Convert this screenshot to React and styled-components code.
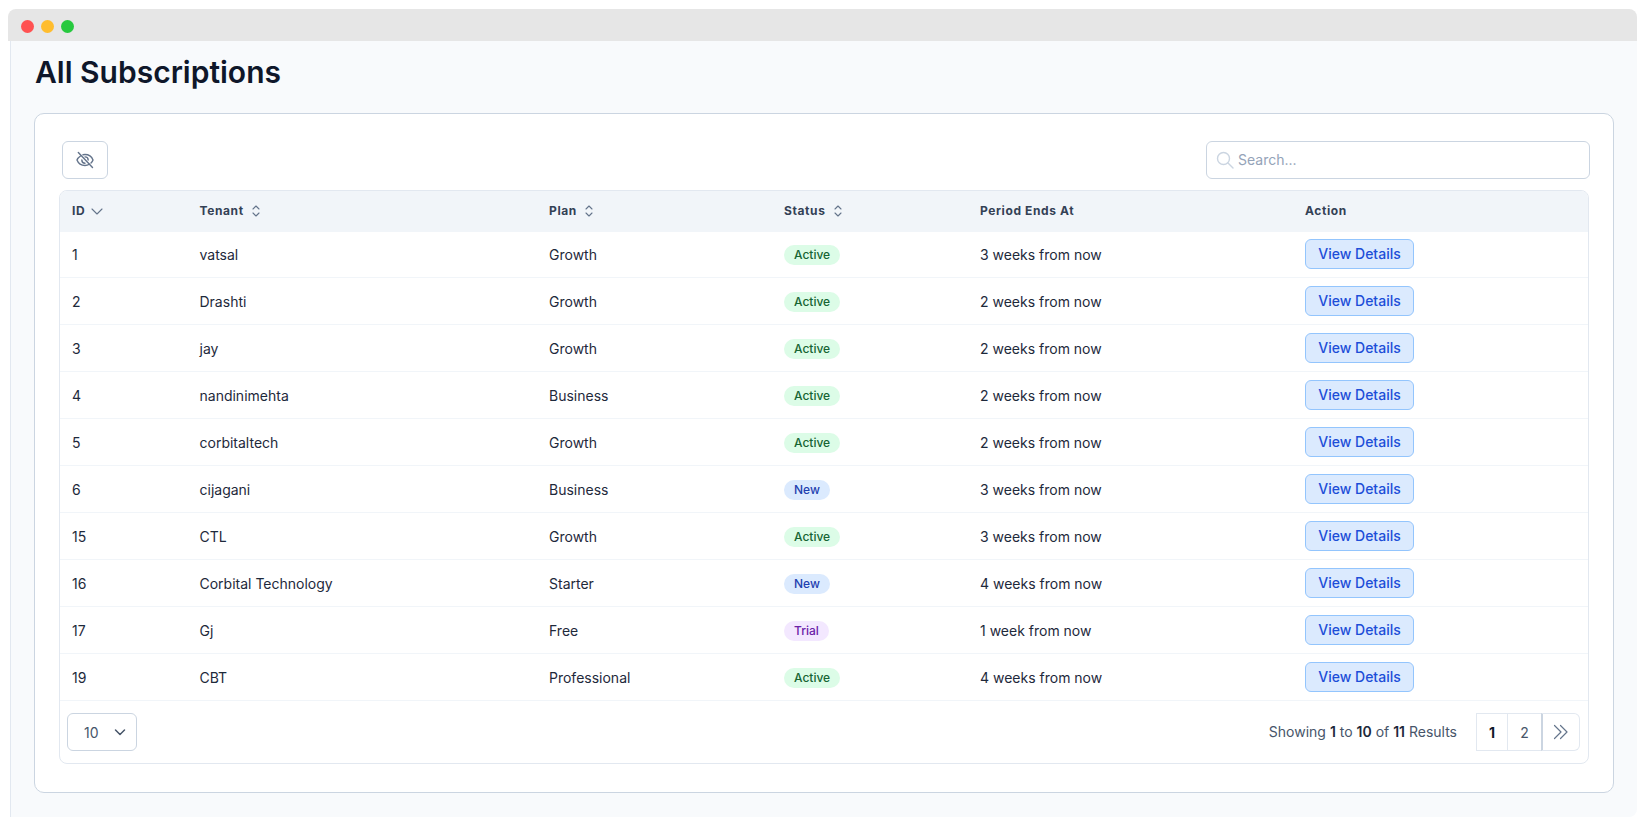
import React from 'react'
import styled, { createGlobalStyle } from 'styled-components'

const GRID = '127.5px 349.5px 235px 196px 325px 1fr'

const rows = [
  { id: 1, tenant: 'vatsal', plan: 'Growth', status: 'Active', ends: '3 weeks from now' },
  { id: 2, tenant: 'Drashti', plan: 'Growth', status: 'Active', ends: '2 weeks from now' },
  { id: 3, tenant: 'jay', plan: 'Growth', status: 'Active', ends: '2 weeks from now' },
  { id: 4, tenant: 'nandinimehta', plan: 'Business', status: 'Active', ends: '2 weeks from now' },
  { id: 5, tenant: 'corbitaltech', plan: 'Growth', status: 'Active', ends: '2 weeks from now' },
  { id: 6, tenant: 'cijagani', plan: 'Business', status: 'New', ends: '3 weeks from now' },
  { id: 15, tenant: 'CTL', plan: 'Growth', status: 'Active', ends: '3 weeks from now' },
  { id: 16, tenant: 'Corbital Technology', plan: 'Starter', status: 'New', ends: '4 weeks from now' },
  { id: 17, tenant: 'Gj', plan: 'Free', status: 'Trial', ends: '1 week from now' },
  { id: 19, tenant: 'CBT', plan: 'Professional', status: 'Active', ends: '4 weeks from now' },
]

const SortIcon = () => (
  <svg width="10" height="14" viewBox="0 0 10 14" fill="none" stroke="#64748b" strokeWidth="1.1" strokeLinecap="round" strokeLinejoin="round">
    <path d="M2 5l3-3 3 3" />
    <path d="M2 9l3 3 3-3" />
  </svg>
)

const App = () => {
  return (
    <>
      <GlobalStyle />
      <Browser>
        <TitleBar>
          <Dot color="#ff5252" />
          <Dot color="#ffbd2e" />
          <Dot color="#27c93f" />
        </TitleBar>
        <Content>
          <Title>All Subscriptions</Title>
          <Card>
            <Toolbar>
              <IconButton>
                <svg width="20" height="20" viewBox="0 0 24 24" fill="none" stroke="#64748b" strokeWidth="1.7" strokeLinecap="round" strokeLinejoin="round">
                  <path d="M4 3l17 18" />
                  <path d="M6.6 7.2C4.6 8.5 3 10.4 2.4 12c1.4 3.6 5.3 6.6 9.6 6.6 1.9 0 3.6-.5 5.2-1.5" />
                  <path d="M9.6 5.7c.8-.2 1.6-.3 2.4-.3 4.3 0 8.2 3 9.6 6.6-.5 1.3-1.3 2.5-2.4 3.6" />
                  <path d="M15.8 12c0-2.1-1.7-3.8-3.8-3.8" />
                  <path d="M8.2 12c0 2.1 1.7 3.8 3.8 3.8" />
                </svg>
              </IconButton>
              <SearchBox>
                <svg width="18" height="18" viewBox="0 0 18 18" fill="none" stroke="#cbd5e1" strokeWidth="1.4" strokeLinecap="round">
                  <circle cx="7.5" cy="7.5" r="6" />
                  <path d="M12 12l5 5" />
                </svg>
                <SearchInput placeholder="Search..." />
              </SearchBox>
            </Toolbar>
            <TableWrap>
              <HeadRow>
                <HeadCell>
                  ID
                  <svg width="14" height="14" viewBox="0 0 14 14" fill="none" stroke="#64748b" strokeWidth="1.1" strokeLinecap="round" strokeLinejoin="round">
                    <path d="M2 5l5 5 5-5" />
                  </svg>
                </HeadCell>
                <HeadCell sortable>Tenant <SortIcon /></HeadCell>
                <HeadCell sortable>Plan <SortIcon /></HeadCell>
                <HeadCell sortable>Status <SortIcon /></HeadCell>
                <HeadCell>Period Ends At</HeadCell>
                <HeadCell>Action</HeadCell>
              </HeadRow>
              {rows.map((row) => (
                <Row key={row.id}>
                  <Cell>{row.id}</Cell>
                  <Cell>{row.tenant}</Cell>
                  <Cell>{row.plan}</Cell>
                  <Cell><Badge status={row.status}>{row.status}</Badge></Cell>
                  <Cell>{row.ends}</Cell>
                  <Cell><DetailsButton>View Details</DetailsButton></Cell>
                </Row>
              ))}
              <Footer>
                <PageSize>
                  10
                  <svg width="14" height="14" viewBox="0 0 14 14" fill="none" stroke="#475569" strokeWidth="1.5" strokeLinecap="round" strokeLinejoin="round">
                    <path d="M2.5 5L7 9.5 11.5 5" />
                  </svg>
                </PageSize>
                <FooterRight>
                  <Results>Showing <b>1</b> to <b>10</b> of <b>11</b> Results</Results>
                  <Pager>
                    <PageButton width={32} active>1</PageButton>
                    <PageButton width={35}>2</PageButton>
                    <PageButton width={39} last>
                      <svg width="16" height="16" viewBox="0 0 16 16" fill="none" stroke="#64748b" strokeWidth="1.2" strokeLinecap="round" strokeLinejoin="round">
                        <path d="M1.5 1.5L8 8l-6.5 6.5" />
                        <path d="M7.5 1.5L14 8l-6.5 6.5" />
                      </svg>
                    </PageButton>
                  </Pager>
                </FooterRight>
              </Footer>
            </TableWrap>
          </Card>
        </Content>
      </Browser>
    </>
  )
}

export default App

const badgeColors = {
  Active: { bg: '#dcfce7', fg: '#166534' },
  New: { bg: '#dbeafe', fg: '#1e40af' },
  Trial: { bg: '#f3e8ff', fg: '#6b21a8' },
}

const GlobalStyle = createGlobalStyle`
  * { box-sizing: border-box; }
  body {
    margin: 0;
    background: #fff;
    font-family: Inter, "Liberation Sans", sans-serif;
    color: #1e293b;
  }
`
const Browser = styled.div`
  width: 1629px;
  margin: 9px 0 0 8px;
`
const TitleBar = styled.div`
  height: 32px;
  display: flex;
  align-items: center;
  gap: 7px;
  padding: 2px 0 0 13px;
  background: #e6e6e6;
  border-radius: 8px 8px 0 0;
`
const Dot = styled.span`
  width: 13px;
  height: 13px;
  border-radius: 50%;
  background: ${({ color }) => color};
`
const Content = styled.div`
  height: 776px;
  margin-left: 2px;
  padding: 0 23px;
  background: #f8fafc;
  border-left: 1px solid #e2e8f0;
  border-radius: 0 0 8px 0;
`
const Title = styled.h1`
  height: 72px;
  margin: 0;
  padding: 10px 0 0 1px;
  font-family: Inter, sans-serif;
  font-size: 30px;
  line-height: 42px;
  font-weight: 600;
  color: #0f172a;
`
const Card = styled.div`
  height: 680px;
  padding: 27px 24px 0;
  background: #fff;
  border: 1px solid #cbd5e1;
  border-radius: 10px;
`
const Toolbar = styled.div`
  display: flex;
  justify-content: space-between;
  align-items: center;
  height: 38px;
  margin-bottom: 11px;
  padding-left: 3px;
`
const IconButton = styled.button`
  width: 46px;
  height: 38px;
  display: flex;
  align-items: center;
  justify-content: center;
  padding: 0;
  background: #fff;
  border: 1px solid #cbd5e1;
  border-radius: 6px;
`
const SearchBox = styled.div`
  width: 384px;
  height: 38px;
  display: flex;
  align-items: center;
  gap: 2px;
  padding: 0 9px;
  margin-right: -1px;
  border: 1px solid #cbd5e1;
  border-radius: 6px;
`
const SearchInput = styled.input`
  flex: 1;
  padding-bottom: 3px;
  border: none;
  outline: none;
  font-family: inherit;
  font-size: 14px;
  color: #334155;
  &::placeholder { color: #94a3b8; }
`
const TableWrap = styled.div`
  height: 574px;
  border: 1px solid #e2e8f0;
  border-radius: 8px;
  overflow: hidden;
`
const HeadRow = styled.div`
  position: relative;
  display: grid;
  grid-template-columns: ${GRID};
  height: 41px;
  padding-bottom: 2px;
  align-items: center;
  background: #f1f5f9;
`
const HeadCell = styled.div`
  display: flex;
  align-items: center;
  gap: ${({ sortable }) => (sortable ? 7.5 : 5)}px;
  padding-left: 12px;
  font-size: 12px;
  font-weight: 700;
  letter-spacing: 0.6px;
  color: #334155;
`
const Row = styled.div`
  display: grid;
  grid-template-columns: ${GRID};
  height: 47px;
  padding-top: 0.6px;
  align-items: center;
  border-bottom: 1px solid #f1f5f9;
  &:nth-child(2) { margin-top: -0.7px; }
`
const Cell = styled.div`
  padding-left: 12px;
  font-size: 14px;
  color: #1e293b;
`
const Badge = styled.span`
  display: inline-flex;
  align-items: center;
  height: 20px;
  padding: 0 10px;
  font-size: 12px;
  font-weight: 500;
  border-radius: 999px;
  background: ${({ status }) => badgeColors[status].bg};
  color: ${({ status }) => badgeColors[status].fg};
`
const DetailsButton = styled.button`
  width: 109px;
  height: 30px;
  display: block;
  margin-top: -1px;
  padding: 0 0 2px;
  font-family: inherit;
  font-size: 14px;
  font-weight: 500;
  color: #1d4ed8;
  background: #dbeafe;
  border: 1px solid #93c5fd;
  border-radius: 6px;
`
const Footer = styled.div`
  display: flex;
  justify-content: space-between;
  padding: 12px 8px 0 7px;
`
const PageSize = styled.div`
  width: 70px;
  height: 38px;
  display: flex;
  align-items: center;
  justify-content: space-between;
  padding: 0 9px 0 16px;
  font-size: 14px;
  color: #475569;
  border: 1px solid #cbd5e1;
  border-radius: 6px;
`
const FooterRight = styled.div`
  display: flex;
  align-items: center;
  gap: 19px;
`
const Results = styled.div`
  padding-bottom: 2px;
  font-size: 14px;
  color: #475569;
  b { font-weight: 600; color: #1e293b; }
`
const Pager = styled.div`
  display: flex;
  height: 38px;
`
const PageButton = styled.div`
  width: ${({ width }) => width}px;
  display: flex;
  align-items: center;
  justify-content: center;
  margin-left: -1px;
  font-size: 14px;
  font-weight: ${({ active }) => (active ? 700 : 400)};
  color: ${({ active }) => (active ? '#0f172a' : '#475569')};
  background: #fff;
  border: 1px solid #e2e8f0;
  border-left-color: ${({ last }) => (last ? '#cbd5e1' : '#e2e8f0')};
  border-left-width: ${({ last }) => (last ? '2px' : '1px')};
  border-radius: ${({ last }) => (last ? '0 6px 6px 0' : '0')};
  &:first-child { margin-left: 0; }
`
